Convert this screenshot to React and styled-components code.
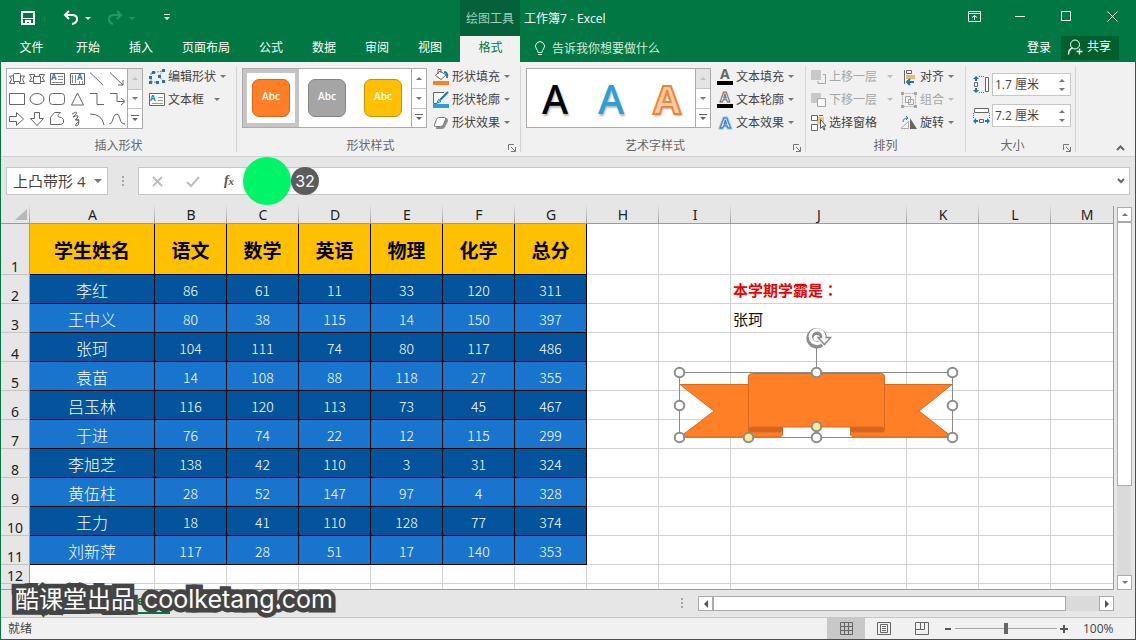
import React from "react";
import styled, { createGlobalStyle, css } from "styled-components";

const UI_FONT = `"Open Sans", "Noto Sans CJK SC", sans-serif`;
const GREEN = "#017843";

const GlobalStyle = createGlobalStyle`
  *, *::before, *::after { box-sizing: border-box; }
  body { margin: 0; background: #e6e6e6; }
  button, input { font: inherit; color: inherit; border: 0; padding: 0; margin: 0; background: none; border-radius: 0; }
  svg { display: block; flex: none; overflow: visible; }
`;

const Window = styled.div`
  display: flex;
  flex-direction: column;
  height: 100vh;
  min-height: 480px;
  overflow: hidden;
  border: 1px solid ${GREEN};
  border-top: 0;
  background: #e6e6e6;
  color: #444;
  font: 12px/16px ${UI_FONT};
`;

/* ---------- title bar ---------- */
const TitleBar = styled.header`
  display: flex;
  flex: 0 0 36px;
  background: ${GREEN};
  color: #fff;
`;
const QuickAccess = styled.div`
  display: flex;
  align-items: center;
  flex: 0 0 459px;
  padding-left: 18px;
`;
const QuickButton = styled.button`
  display: flex;
  align-items: center;
  justify-content: center;
  gap: 6px;
  height: 24px;
  width: ${(p) => p.$w || 44}px;
  margin-right: ${(p) => p.$gap || 0}px;
  opacity: ${(p) => (p.disabled ? 0.3 : 1)};
`;
const ContextTitle = styled.div`
  flex: 0 0 60px;
  padding-top: 2px;
  background: #05613a;
  color: #9fd0b6;
  line-height: 34px;
  text-align: center;
`;
const DocTitle = styled.h1`
  flex: 1;
  margin: 0;
  padding: 2px 0 0 4px;
  font: 400 12px/34px ${UI_FONT};
`;
const WindowButton = styled.button`
  display: flex;
  align-items: center;
  justify-content: center;
  width: 46px;
  height: 32px;
`;

/* ---------- ribbon tabs ---------- */
const TabRow = styled.nav`
  display: flex;
  flex: 0 0 26px;
  background: ${GREEN};
  color: #fff;
`;
const Tab = styled.button`
  height: 26px;
  padding: 0 14px 2px 15px;
  white-space: nowrap;
  ${(p) => p.$file && css`width: 60px;`}
  ${(p) =>
    p.$active &&
    css`
      width: 60px;
      margin-left: 4px;
      background: #f1f1f1;
      color: ${GREEN};
    `}
`;
const TellMe = styled.button`
  display: flex;
  align-items: center;
  gap: 6px;
  padding: 0 0 0 14px;
  margin-right: auto;
  color: #d5ebdf;
`;
const SignIn = styled.button`
  padding: 0 10px 2px;
`;
const Share = styled.button`
  display: flex;
  align-items: center;
  gap: 4px;
  height: 24px;
  padding: 0 8px 2px 6px;
  margin-right: 16px;
  background: #005f2b;
`;

/* ---------- ribbon ---------- */
const Ribbon = styled.section`
  display: flex;
  flex: 0 0 95px;
  padding-top: 4px;
  background: #f1f1f1;
  border-bottom: 1px solid #d2d2d2;
`;
const GroupBox = styled.div`
  display: flex;
  flex-direction: column;
  flex: 0 0 ${(p) => p.$w}px;
  height: 86px;
  padding: 0 0 0 5px;
  border-right: 1px solid #d4d4d4;
`;
const GroupBody = styled.div`
  display: flex;
  flex: 1;
  gap: ${(p) => p.$gap || 6}px;
`;
const GroupFoot = styled.div`
  position: relative;
  height: 14px;
  padding-right: ${(p) => (p.$launcher ? 21 : 5)}px;
  color: #666;
  line-height: 16px;
  text-align: center;
`;
const Launcher = styled.button`
  position: absolute;
  right: 4px;
  bottom: 0;
  width: 8px;
  height: 8px;
`;
const RibbonEnd = styled.div`
  display: flex;
  flex: 1;
  align-items: flex-end;
  justify-content: flex-end;
  padding: 0 10px 5px 0;
`;
const Gallery = styled.div`
  display: flex;
  height: ${(p) => p.$h || 60}px;
  margin-top: 2px;
  background: #fff;
  border: 1px solid #ababab;
`;
const ShapeGrid = styled.div`
  display: grid;
  grid-template-columns: repeat(6, 20px);
  grid-template-rows: repeat(3, 20px);
`;
const ShapeButton = styled.button`
  display: flex;
  align-items: center;
  justify-content: center;
`;
const GalleryScroll = styled.div`
  display: grid;
  grid-template-rows: repeat(3, 1fr);
  width: 15px;
  border-left: 1px solid #ababab;
`;
const ScrollStep = styled.button`
  display: flex;
  align-items: center;
  justify-content: center;
  background: ${(p) => (p.disabled ? "#e4e4e4" : "#fff")};
  & + & { border-top: 1px solid #c6c6c6; }
`;
const StyleItem = styled.button`
  display: flex;
  align-items: center;
  justify-content: center;
  width: 56px;
  border: 4px solid ${(p) => (p.$on ? "#c5c5c5" : "transparent")};
`;
const StyleSwatch = styled.span`
  width: 38px;
  height: 38px;
  border: 1px solid ${(p) => p.$edge};
  border-radius: 7px;
  background: ${(p) => p.$fill};
  color: #fff;
  font-size: 10px;
  font-weight: 600;
  line-height: 32px;
`;
const ArtItem = styled.button`
  width: 56px;
  padding-top: 2px;
  font: 500 40px/54px "Noto Sans", sans-serif;
  text-shadow: 1px 2px 2px rgba(0, 0, 0, 0.3);
  color: ${(p) => p.$fill};
  ${(p) =>
    p.$outline &&
    css`
      -webkit-text-stroke: 2px ${p.$outline};
      font-weight: 700;
    `}
`;
const CommandList = styled.div`
  display: flex;
  flex-direction: column;
`;
const CommandButton = styled.button`
  display: flex;
  align-items: center;
  height: 23px;
  padding-bottom: 2px;
  white-space: nowrap;
  color: ${(p) => (p.disabled ? "#a6a6a6" : "#444")};
`;
const CommandLabel = styled.span`
  margin: 0 ${(p) => p.$after}px 0 3px;
`;
const SizeRows = styled.div`
  display: flex;
  flex-direction: column;
  gap: 8px;
  padding: 7px 0 0 2px;
`;
const SizeField = styled.label`
  display: flex;
  align-items: center;
  gap: 2px;
`;
const SpinBox = styled.span`
  display: flex;
  width: 79px;
  height: 23px;
  background: #fff;
  border: 1px solid #c6c6c6;
`;
const SpinInput = styled.input`
  width: 60px;
  padding-left: 2px;
  outline: 0;
`;
const SpinButtons = styled.span`
  display: flex;
  flex-direction: column;
  justify-content: center;
  gap: 6px;
  padding-left: 6px;
`;

/* ---------- formula bar ---------- */
const FormulaRow = styled.section`
  position: relative;
  display: flex;
  flex: 0 0 49px;
  padding: 10px 5px 11px;
`;
const NameBox = styled.div`
  display: flex;
  align-items: center;
  width: 102px;
  height: 28px;
  background: #fff;
  border: 1px solid #c6c6c6;
`;
const NameInput = styled.input`
  width: 87px;
  padding-left: 6px;
  font: 15px/24px ${UI_FONT};
  outline: 0;
`;
const Grip = styled.div`
  display: grid;
  place-items: center;
  width: ${(p) => p.$w}px;
`;
const FormulaBox = styled.div`
  display: flex;
  align-items: center;
  flex: 1;
  height: 28px;
  background: #fff;
  border: 1px solid #c6c6c6;
`;
const FormulaButton = styled.button`
  display: grid;
  place-items: center;
  width: 36px;
  height: 26px;
  color: #555;
  font: italic 700 14px/20px "Liberation Serif", serif;
  small { font-size: 11px; }
`;
const FormulaInput = styled.input`
  flex: 1;
  min-width: 0;
  outline: 0;
`;
const ClickHalo = styled.div`
  position: absolute;
  left: 242px;
  top: 0;
  width: 48px;
  height: 48px;
  border-radius: 50%;
  background: #00f468;
`;
const CountBadge = styled.div`
  position: absolute;
  left: 290px;
  top: 10px;
  width: 28px;
  height: 28px;
  border-radius: 50%;
  background: #5c5c5c;
  color: #fff;
  font: 16px/28px Inter, sans-serif;
  text-align: center;
`;

/* ---------- sheet ---------- */
const SheetArea = styled.main`
  display: flex;
  flex: 1;
  min-height: 0;
`;
const GridPane = styled.div`
  position: relative;
  flex: 1;
  min-width: 0;
  overflow: hidden;
  border-right: 1px solid #9b9b9b;
  border-bottom: 1px solid #9b9b9b;
`;
const Grid = styled.table`
  width: calc(100% + 10px);
  table-layout: fixed;
  border-collapse: separate;
  border-spacing: 0;
  background: #fff;
`;
const ColHead = styled.th`
  height: 18px;
  padding: 0;
  border-bottom: 1px solid #9b9b9b;
  background: linear-gradient(#dcdcdc, #a0a0a0) right / 1px 100% no-repeat #e6e6e6;
  color: #222;
  font: 400 14px/17px "Noto Sans", sans-serif;
  vertical-align: bottom;
`;
const CornerMark = styled.svg`
  margin-left: 14px;
  margin-bottom: 3px;
`;
const RowHead = styled.th`
  padding: 0;
  border-right: 1px solid #9b9b9b;
  border-bottom: 1px solid #c4c4c4;
  background: #e6e6e6;
  color: #222;
  font: 400 14px/15px "Noto Sans", sans-serif;
  vertical-align: bottom;
`;
const SheetRow = styled.tr`
  height: ${(p) => p.$h}px;
`;
const Cell = styled.td`
  padding: 2px 0 0 2px;
  border-right: 1px solid #d2d2d2;
  border-bottom: 1px solid #d2d2d2;
  color: #111;
  font: 15px/24px "Noto Sans CJK SC", sans-serif;
  white-space: nowrap;
  ${(p) =>
    p.$note &&
    css`
      color: #f00000;
      font-family: "Noto Sans CJK TC", sans-serif;
      font-weight: 700;
    `}
`;
const DataCell = styled.td`
  padding: 2px 0 0;
  border-right: 1px solid #000;
  border-bottom: 1px solid #000;
  background: ${(p) => (p.$odd ? "#1874cd" : "#03549c")};
  color: #fff;
  font: ${(p) => (p.$name ? "300 16px/24px" : "300 14px/24px")} "Noto Sans CJK SC", sans-serif;
  text-align: center;
`;
const FieldCell = styled.td`
  padding: 2px 0 0;
  border-right: 1px solid #000;
  border-bottom: 1px solid #000;
  background: #ffc000;
  color: #000;
  font: 700 19px/28px "Noto Sans CJK SC", sans-serif;
  text-align: center;
`;
const Banner = styled.svg`
  position: absolute;
  left: 671px;
  top: 120px;
`;
const VScroll = styled.div`
  display: flex;
  flex-direction: column;
  width: 14px;
  margin: 1px 4px 0 3px;
  background: #dadada;
`;
const ScrollButton = styled.button`
  display: grid;
  place-items: center;
  flex: 0 0 15px;
  width: 15px;
  height: 15px;
  background: #fff;
  border: 1px solid #ababab;
`;
const VThumb = styled.div`
  flex: 0 0 264px;
  width: 15px;
  margin-bottom: auto;
  background: #fff;
  border: 1px solid #ababab;
`;

/* ---------- bottom bars ---------- */
const SheetTabs = styled.div`
  position: relative;
  display: flex;
  align-items: center;
  flex: 0 0 27px;
  padding-right: 21px;
`;
const SheetTab = styled.button`
  align-self: flex-start;
  width: 69px;
  height: 24px;
  margin: 0 auto 0 100px;
  border-bottom: 2px solid ${GREEN};
  color: ${GREEN};
  font-weight: 700;
`;
const HScroll = styled.div`
  display: flex;
  flex: 0 0 416px;
  background: #dadada;
`;
const HThumb = styled.div`
  flex: 0 0 353px;
  height: 15px;
  margin-right: auto;
  background: #fff;
  border: 1px solid #ababab;
`;
const Watermark = styled.div`
  position: absolute;
  left: 14px;
  top: -9px;
  color: #fff;
  font: 400 24px/36px Inter, "Noto Sans CJK SC", sans-serif;
  white-space: nowrap;
  -webkit-text-stroke: 9px #444;
  stroke-linejoin: round;
  paint-order: stroke fill;
`;
const WatermarkSite = styled.span`
  margin-left: 9px;
  font-size: 25px;
`;
const StatusBar = styled.footer`
  display: flex;
  align-items: center;
  flex: 0 0 22px;
  padding: 0 20px 0 7px;
  background: #f1f1f1;
  border-top: 1px solid #c6c6c6;
`;
const StatusText = styled.span`
  margin-right: auto;
`;
const ViewButton = styled.button`
  display: grid;
  place-items: center;
  width: 38px;
  height: 21px;
  background: ${(p) => (p.$on ? "#c8c8c8" : "transparent")};
`;
const ZoomButton = styled.button`
  display: grid;
  place-items: center;
  width: 14px;
  height: 20px;
`;
const ZoomSlider = styled.input`
  appearance: none;
  width: 102px;
  height: 20px;
  background: linear-gradient(#a6a6a6, #a6a6a6) center / 100% 1px no-repeat;
  &::-webkit-slider-thumb {
    appearance: none;
    width: 4px;
    height: 11px;
    background: #666;
  }
`;
const ZoomValue = styled.output`
  width: 32px;
  margin-left: 12px;
`;

/* ---------- small drawings ---------- */
const Icon = ({ w = 16, h = w, children, ...rest }) => (
  <svg width={w} height={h} viewBox={`0 0 ${w} ${h}`} fill="none" stroke="#666" aria-hidden="true" {...rest}>
    {children}
  </svg>
);
const Caret = ({ color = "#777", up }) => (
  <Icon w={6} h={3} stroke="none"><path fill={color} d={up ? "M0 3h6L3 0z" : "M0 0h6L3 3z"} /></Icon>
);
const SideCaret = ({ left }) => (
  <Icon w={4} h={8} stroke="none"><path fill="#555" d={left ? "M4 0v8L0 4z" : "M0 0v8l4-4z"} /></Icon>
);
const More = () => (
  <Icon w={8} h={7} stroke="none"><path fill="#666" d="M0 0h8v1H0zM1 3h6L4 6z" /></Icon>
);
const Dots = () => (
  <Icon w={2} h={11} stroke="none"><path fill="#a6a6a6" d="M0 0h2v2H0zM0 4h2v2H0zM0 8h2v2H0z" /></Icon>
);
const LetterA = ({ x, y, size = 9, ...rest }) => (
  <text x={x} y={y} fontFamily="Noto Sans" fontWeight="700" fontSize={size} stroke="none" fill="#1878b8" {...rest}>A</text>
);
const TextBoxIcon = () => (
  <Icon w={16} h={14}>
    <path d="M.5 .5h15v12H.5z" fill="#fff" />
    <LetterA x={1} y={8} size={8} />
    <path stroke="#999" d="M9 4.5h5M9 7.5h5M3 10.5h11" />
  </Icon>
);

const SHAPES = [
  ["上凸带形", <path d="M4.500 3.500q0-1 1-1h5q1 0 1 1v7h-7zM4.500 5H.5l2 3.500-2 4h5v-2M11.500 5h4l-2 3.500 2 4h-5v-2" />],
  ["前凸带形", <path d="M4.500 5.500h7v7h-7zM4.500 10.500h-4l2-3.500-2-3.500h5v2M11.500 10.500h4l-2-3.500 2-3.500h-5v2" />],
  ["横排文本框", <><path d="M1.500 2.500h14v11h-14z" /><LetterA x={2} y={9} size={8} /><path stroke="#888" d="M9 5.500h5M9 8.500h5M3 11.500h11" /></>],
  ["竖排文本框", <><path d="M1.500 2.500h14v11h-14z" /><LetterA x={8} y={9} size={8} /><path stroke="#888" d="M3.500 4v8M6.500 4v8M10.500 10v3M13.500 10v3" /></>],
  ["直线", <path d="M1 1.500l13 12.500" />],
  ["箭头", <path d="M1 1.500l13 12.500M14 9v5H9" />],
  ["矩形", <path d="M.5 2.500h15v11H.500z" />],
  ["椭圆", <ellipse cx="8" cy="8" rx="7" ry="5.500" />],
  ["圆角矩形", <rect x=".5" y="2.500" width="15" height="11" rx="3" />],
  ["三角形", <path d="M8.500 2l6 12h-12z" />],
  ["肘形连接符", <path d="M1 2.500h7v11h7" />],
  ["肘形箭头", <path d="M1 2.500h7v8h7M12 7l4 3.500-4 3.500" />],
  ["右箭头", <path d="M.5 5.500h7v-4l7 6.500-7 6.500v-4h-7z" />],
  ["下箭头", <path d="M5.500 1.500h5v6h4L8 14.500 1.500 7.500h4z" />],
  ["任意多边形", <path d="M1.500 13.500v-7l4-5h6c-4 3-3 5 1 5q3 1 2 5-1 2-3 2z" />],
  ["自由曲线", <path d="M3 3l4-2q2 1-3 5 5-2 5-1 0 2-3 4 4-2 4 0t-3 4q-1 2 0 2 3 0 3-4 0-2-3-2" />],
  ["弧形", <path d="M1 3q12 0 14 11" />],
  ["曲线", <path d="M0 13q3 0 4-5t4-5q2 0 3 5t5 5" />],
];

const FillIcon = () => (
  <Icon><path fill="#fff" d="M7 2L2.500 6.500 8 10.500l5-4.500zM5 5V.500h3V4" /><path stroke="#1878b8" strokeWidth="2" d="M11 3q4 0 3 6" /><path stroke="none" fill="#ff7f27" d="M0 12h16v4H0z" /></Icon>
);
const OutlineIcon = () => (
  <Icon><path fill="#fff" d="M11 .5H.5v11H4" /><path stroke="#1878b8" strokeWidth="2" d="M7 8l8-8" /><path stroke="#1878b8" d="M4 11l1.500-3.500L8 9.500z" /><path stroke="none" fill="#2b9fd6" d="M0 12h16v4H0z" /></Icon>
);
const EffectIcon = () => (
  <Icon><path stroke="none" fill="#8c8c8c" d="M5 3h8q2 0 2 3l-3 6q-1 2-3 2H3z" /><path stroke="#777" fill="#fff" d="M5.500 2.500h6q2 0 1 2l-2 5q-1 2-3 2h-5q-2 0-1-2l2-5q1-2 2-2z" /></Icon>
);
const TextFillIcon = () => (
  <Icon><LetterA x={3} y={10} size={14} fill="#666" /><path stroke="none" fill="#000" d="M0 12h16v4H0z" /></Icon>
);
const TextOutlineIcon = () => (
  <Icon><LetterA x={3} y={10} size={14} fill="#fff" stroke="#666" /><path stroke="none" fill="#000" d="M0 12h16v4H0z" /></Icon>
);
const TextEffectIcon = () => (
  <Icon><LetterA x={3} y={13} size={15} fill="#9ccbee" stroke="#9ccbee" strokeWidth="3" /><LetterA x={3} y={13} size={15} fill="#fff" stroke="#1878b8" /></Icon>
);
const EditShapeIcon = () => (
  <Icon><path stroke="#888" strokeDasharray="2 1" d="M2 4l12-2-4 5 4 5M2 4v9h6" /><path stroke="none" fill="#1878b8" d="M0 7h3v3H0zM3 2h3v3H3zM13 0h3v3h-3zM9 6h3v3H9zM13 11h3v3h-3zM0 12h3v3H0zM7 12h3v3H7z" /></Icon>
);
const ForwardIcon = () => (
  <Icon w={15}><path stroke="#a6a6a6" d="M12 5.500h2.500v9H7V12" /><path stroke="none" fill="#c8c8c8" d="M0 1h10v10H0z" /></Icon>
);
const BackwardIcon = () => (
  <Icon w={15}><path stroke="none" fill="#c8c8c8" d="M0 1h10v10H0z" /><path stroke="#a6a6a6" fill="#f8f8f8" d="M6.500 6.500h8v8h-8z" /></Icon>
);
const PaneIcon = () => (
  <Icon w={15}><path stroke="none" fill="#f3c27b" d="M6 2h7v7H6z" /><path fill="#fff" d="M.5 .5h6v5h-6zM.5 9.500h6v6h-6z" /><path d="M8 .5h4" /><path fill="#fff" stroke="#555" d="M9.500 4.500v9l2-2 1.500 3.500 1-.5-1.500-3.500h2.500z" /></Icon>
);
const AlignIcon = () => (
  <Icon><path d="M3.500 1v14M5.500 1.500h5v3h-5z" /><path stroke="none" fill="#f3b56b" d="M5 6h9v4H5z" /><path stroke="#1878b8" strokeWidth="2" d="M6 13h7M9 10l-3 3 3 3" /></Icon>
);
const GroupIcon = () => (
  <Icon><path stroke="#b0b0b0" strokeDasharray="2 1" d="M1.500 1.500h13v13h-13z" /><path stroke="#a6a6a6" d="M4.500 4.500h5v6h-5zM7.500 7.500h5v5h-5z" /><path stroke="none" fill="#a6a6a6" d="M0 0h3v3H0zM13 0h3v3h-3zM0 13h3v3H0zM13 13h3v3h-3z" /></Icon>
);
const RotateIcon = () => (
  <Icon><path stroke="#aaa" fill="#fff" d="M0 13.500h7.500V6.500z" /><path stroke="none" fill="#666" d="M9 3v11h7z" /><path stroke="#1878b8" d="M2 7q0-4 5-4M5 1l2 2-2 2" /></Icon>
);
const HeightIcon = () => (
  <Icon w={17} h={17}><path fill="#fff" d="M12.500 1.500h3v14h-3z" /><path strokeDasharray="1 1" d="M6 .5h6M6 16.500h6" /><path d="M1.500 6.500h3v4h-3z" /><path stroke="none" fill="#1878a8" d="M3 0l3 3H4v2H2V3H0zM3 17l3-3H4v-2H2v2H0z" /></Icon>
);
const WidthIcon = () => (
  <Icon w={17} h={17}><path fill="#fff" d="M1.500 1.500h14v4h-14z" /><path strokeDasharray="1 1" d="M.5 6v5M16.500 6v5" /><path d="M6.500 12.500h4v3h-4z" /><path stroke="none" fill="#1878a8" d="M0 14l3-3v2h2v2H3v2zM17 14l-3-3v2h-2v2h2v2z" /></Icon>
);

const Command = ({ icon, label, after = 6, menu = true, disabled }) => (
  <CommandButton disabled={disabled}>
    {icon}
    <CommandLabel $after={after}>{label}</CommandLabel>
    {menu && <Caret color={disabled ? "#bbb" : "#777"} />}
  </CommandButton>
);

const Steps = ({ topDisabled }) => (
  <GalleryScroll>
    <ScrollStep aria-label="上一行" disabled={topDisabled}><Caret up color={topDisabled ? "#c2c2c2" : "#777"} /></ScrollStep>
    <ScrollStep aria-label="下一行"><Caret /></ScrollStep>
    <ScrollStep aria-label="其他"><More /></ScrollStep>
  </GalleryScroll>
);

const Group = ({ label, width, launcher, gap, children }) => (
  <GroupBox $w={width}>
    <GroupBody $gap={gap}>{children}</GroupBody>
    <GroupFoot $launcher={launcher}>
      {label}
      {launcher && (
        <Launcher aria-label={`${label}设置`}>
          <Icon w={8} h={8} stroke="#777"><path d="M.5 6V.5H6M3 3l4 4M7.500 3v4.500H3" /></Icon>
        </Launcher>
      )}
    </GroupFoot>
  </GroupBox>
);

const Size = ({ icon, value, name }) => (
  <SizeField>
    {icon}
    <SpinBox>
      <SpinInput aria-label={name} defaultValue={value} />
      <SpinButtons>
        <button aria-label={`增加${name}`}><Caret up /></button>
        <button aria-label={`减少${name}`}><Caret /></button>
      </SpinButtons>
    </SpinBox>
  </SizeField>
);

/* ---------- data ---------- */
const TABS = ["开始", "插入", "页面布局", "公式", "数据", "审阅", "视图"];
const COLUMNS = [
  ["A", 125], ["B", 72], ["C", 72], ["D", 72], ["E", 72], ["F", 72], ["G", 72],
  ["H", 72], ["I", 72], ["J", 176], ["K", 72], ["L", 72], ["M", null],
];
const FIELDS = ["学生姓名", "语文", "数学", "英语", "物理", "化学", "总分"];
const STUDENTS = [
  ["李红", 86, 61, 11, 33, 120, 311],
  ["王中义", 80, 38, 115, 14, 150, 397],
  ["张珂", 104, 111, 74, 80, 117, 486],
  ["袁苗", 14, 108, 88, 118, 27, 355],
  ["吕玉林", 116, 120, 113, 73, 45, 467],
  ["于进", 76, 74, 22, 12, 115, 299],
  ["李旭芝", 138, 42, 110, 3, 31, 324],
  ["黄伍柱", 28, 52, 147, 97, 4, 328],
  ["王力", 18, 41, 110, 128, 77, 374],
  ["刘新萍", 117, 28, 51, 17, 140, 353],
];
const NOTES = { 2: "本学期学霸是：", 3: "张珂" };
const STYLES = [["#ff7f27", "#d9661b"], ["#a5a5a5", "#858585"], ["#ffc000", "#c49400"]];
const HANDLES = [[679, 372], [816, 372], [952, 372], [679, 405], [952, 405], [679, 437], [816, 437], [952, 437]];

const EmptyCells = ({ names, note }) =>
  names.map((c) => (
    <Cell key={c} $note={c === "J" && note === NOTES[2]}>{c === "J" ? note : null}</Cell>
  ));
const ALL = COLUMNS.map(([c]) => c);
const RIGHT = ALL.slice(7);

export default function App() {
  return (
    <Window>
      <GlobalStyle />
      <TitleBar>
        <QuickAccess>
          <QuickButton aria-label="保存" $w={18} $gap={18}>
            <Icon stroke="#fff" w={14} h={14}><path strokeWidth="2" d="M1 1h12v12H1z" /><path strokeWidth="1" d="M2 7.500h10" /><path fill="#fff" stroke="none" d="M4 9h6v4H8v-2H6v2H4z" /></Icon>
          </QuickButton>
          <QuickButton aria-label="撤消">
            <Icon stroke="#fff"><path strokeWidth="2" d="M6 1L2 5l4 4M2 5h7q5 0 5 4t-5 5" /></Icon>
            <Caret color="#fff" />
          </QuickButton>
          <QuickButton aria-label="恢复" disabled $gap={16}>
            <Icon stroke="#7fe0b4"><path strokeWidth="2" d="M10 1l4 4-4 4M14 5H7q-5 0-5 4t4 5" /></Icon>
            <Caret color="#7fe0b4" />
          </QuickButton>
          <QuickButton aria-label="自定义快速访问工具栏" $w={16}>
            <Icon w={6} h={8} stroke="none"><path fill="#fff" d="M0 0h6v1H0zM0 3h6L3 6z" /></Icon>
          </QuickButton>
        </QuickAccess>
        <ContextTitle>绘图工具</ContextTitle>
        <DocTitle>工作簿7 - Excel</DocTitle>
        <WindowButton aria-label="功能区显示选项">
          <Icon stroke="#fff" w={13} h={11}><path d="M.5 .5h12v10H.5zM.5 2.500h12M6.500 9V4.500M4 6.500l2.500-2L9 6.500" /></Icon>
        </WindowButton>
        <WindowButton aria-label="最小化"><Icon stroke="#fff" w={10} h={1}><path d="M0 .5h10" /></Icon></WindowButton>
        <WindowButton aria-label="最大化"><Icon stroke="#fff" w={10} h={10}><path d="M.5 .5h9v9h-9z" /></Icon></WindowButton>
        <WindowButton aria-label="关闭"><Icon stroke="#fff" w={11} h={11}><path d="M.5 .5l10 10M10.500 .5l-10 10" /></Icon></WindowButton>
      </TitleBar>

      <TabRow>
        <Tab $file>文件</Tab>
        {TABS.map((t) => <Tab key={t}>{t}</Tab>)}
        <Tab $active>格式</Tab>
        <TellMe>
          <Icon stroke="#e8f5ee" w={12} h={14}><path d="M4 10.500q0-2-1.500-3.500a4.500 4.500 0 1 1 7 0Q8 8.500 8 10.500zM4 12.500h4" /></Icon>
          告诉我你想要做什么
        </TellMe>
        <SignIn>登录</SignIn>
        <Share>
          <Icon stroke="#fff" w={16} h={16}><circle cx="8" cy="5.500" r="4.500" /><path strokeWidth="1.400" d="M1.500 15.500q0-5 4-6.500M9.500 12.500h6M12.500 9.500v6" /></Icon>
          共享
        </Share>
      </TabRow>

      <Ribbon>
        <Group label="插入形状" width={236}>
          <Gallery $h={61}>
            <ShapeGrid>
              {SHAPES.map(([name, art]) => (
                <ShapeButton key={name} aria-label={name}><Icon>{art}</Icon></ShapeButton>
              ))}
            </ShapeGrid>
            <Steps topDisabled />
          </Gallery>
          <CommandList>
            <Command icon={<EditShapeIcon />} label="编辑形状" after={4} />
            <Command icon={<TextBoxIcon />} label="文本框" after={10} />
          </CommandList>
        </Group>
        <Group label="形状样式" width={284} launcher>
          <Gallery>
            {STYLES.map(([fill, edge], i) => (
              <StyleItem key={fill} $on={i === 0}><StyleSwatch $fill={fill} $edge={edge}>Abc</StyleSwatch></StyleItem>
            ))}
            <Steps />
          </Gallery>
          <CommandList>
            <Command icon={<FillIcon />} label="形状填充" after={4} />
            <Command icon={<OutlineIcon />} label="形状轮廓" after={4} />
            <Command icon={<EffectIcon />} label="形状效果" after={4} />
          </CommandList>
        </Group>
        <Group label="艺术字样式" width={285} launcher>
          <Gallery>
            <ArtItem $fill="#000">A</ArtItem>
            <ArtItem $fill="#2b9fd6">A</ArtItem>
            <ArtItem $fill="#fbcdaa" $outline="#f5822d">A</ArtItem>
            <Steps topDisabled />
          </Gallery>
          <CommandList>
            <Command icon={<TextFillIcon />} label="文本填充" after={4} />
            <Command icon={<TextOutlineIcon />} label="文本轮廓" after={4} />
            <Command icon={<TextEffectIcon />} label="文本效果" after={4} />
          </CommandList>
        </Group>
        <Group label="排列" width={160} gap={8}>
          <CommandList>
            <Command icon={<ForwardIcon />} label="上移一层" after={10} disabled />
            <Command icon={<BackwardIcon />} label="下移一层" after={10} disabled />
            <Command icon={<PaneIcon />} label="选择窗格" menu={false} />
          </CommandList>
          <CommandList>
            <Command icon={<AlignIcon />} label="对齐" after={4} />
            <Command icon={<GroupIcon />} label="组合" after={4} disabled />
            <Command icon={<RotateIcon />} label="旋转" after={4} />
          </CommandList>
        </Group>
        <Group label="大小" width={110} launcher>
          <SizeRows>
            <Size icon={<HeightIcon />} value="1.7 厘米" name="高度" />
            <Size icon={<WidthIcon />} value="7.2 厘米" name="宽度" />
          </SizeRows>
        </Group>
        <RibbonEnd>
          <button aria-label="折叠功能区"><Icon w={9} h={6}><path strokeWidth="2" d="M1 5l3.500-3.500L8 5" /></Icon></button>
        </RibbonEnd>
      </Ribbon>

      <FormulaRow>
        <NameBox>
          <NameInput aria-label="名称框" defaultValue="上凸带形 4" />
          <button aria-label="名称列表"><Icon w={8} h={4} stroke="none"><path fill="#777" d="M0 0h8L4 4z" /></Icon></button>
        </NameBox>
        <Grip $w={30}><Dots /></Grip>
        <FormulaBox>
          <FormulaButton aria-label="取消"><Icon w={11} h={11} stroke="#bdbdbd"><path strokeWidth="2" d="M1 1l9 9M10 1l-9 9" /></Icon></FormulaButton>
          <FormulaButton aria-label="输入"><Icon w={14} h={11} stroke="#bdbdbd"><path strokeWidth="2" d="M1 6l4 4 8-9" /></Icon></FormulaButton>
          <FormulaButton aria-label="插入函数"><span>f<small>x</small></span></FormulaButton>
          <FormulaInput aria-label="编辑栏" />
          <button aria-label="展开编辑栏"><Icon w={16} h={6}><path strokeWidth="2" d="M5 1l3 3 3-3" /></Icon></button>
        </FormulaBox>
        <ClickHalo />
        <CountBadge>32</CountBadge>
      </FormulaRow>

      <SheetArea>
        <GridPane>
          <Grid>
            <colgroup>
              <col width={29} />
              {COLUMNS.map(([c, w]) => <col key={c} width={w || undefined} />)}
            </colgroup>
            <thead>
              <tr>
                <ColHead aria-label="全选"><CornerMark width="12" height="11"><path fill="#b8b8b8" d="M12 0v11H0z" /></CornerMark></ColHead>
                {ALL.map((c) => <ColHead key={c}>{c}</ColHead>)}
              </tr>
            </thead>
            <tbody>
              <SheetRow $h={51}>
                <RowHead>1</RowHead>
                {FIELDS.map((f) => <FieldCell key={f}>{f}</FieldCell>)}
                <EmptyCells names={RIGHT} />
              </SheetRow>
              {STUDENTS.map((row, i) => (
                <SheetRow key={row[0]} $h={29}>
                  <RowHead>{i + 2}</RowHead>
                  {row.map((v, j) => <DataCell key={j} $odd={i % 2 === 1} $name={j === 0}>{v}</DataCell>)}
                  <EmptyCells names={RIGHT} note={NOTES[i + 2]} />
                </SheetRow>
              ))}
              <SheetRow $h={19}><RowHead>12</RowHead><EmptyCells names={ALL} /></SheetRow>
              <SheetRow $h={29}><RowHead /><EmptyCells names={ALL} /></SheetRow>
            </tbody>
          </Grid>
          <Banner width="290" height="120" viewBox="672 326 290 120" fill="none" role="img" aria-label="上凸带形 4">
            <g fill="#ff7f27" stroke="#d9691e">
              <path d="M680 384.500H749V428H782.500V434Q782.500 437 778 437H680L714 411z" />
              <path d="M952 384.500H884V428H850.500V434Q850.500 437 855 437H952L919 411z" />
              <path fill="#d4651c" d="M748.500 430q0-3 4-3H782.500V430q0 2-3 2H751q-2.500 0-2.500-2zM884.500 430q0-3-4-3H850.500V430q0 2 3 2H882q2.500 0 2.500-2z" />
              <path d="M748.500 430V376q0-2.500 4-2.500H880.500q4 0 4 2.500V430q0-3-4-3H752.500q-4 0-4 3z" />
            </g>
            <path stroke="#8c8c8c" d="M679.500 372.500H952.500V437.500H679.500zM816.500 348V372" />
            {HANDLES.map(([x, y]) => <circle key={`${x}-${y}`} cx={x + 0.5} cy={y + 0.5} r="4.800" fill="#fff" stroke="#8c8c8c" strokeWidth="2" />)}
            <circle cx="816.500" cy="426.500" r="4.800" fill="#fbe88f" stroke="#8c8c8c" strokeWidth="2" />
            <circle cx="748.500" cy="437.500" r="4.800" fill="#fbe88f" stroke="#8c8c8c" strokeWidth="2" />
            <path stroke="#8c8c8c" strokeWidth="7" d="M821 343.500A6.800 6.800 0 1 1 823.500 338" />
            <path stroke="#8c8c8c" strokeWidth="1.500" fill="#fff" d="M818 337.500H830.500L824.500 344.500z" />
            <path stroke="#fff" strokeWidth="3.200" d="M820.300 342.700A6.800 6.800 0 1 1 823.500 339" />
          </Banner>
        </GridPane>
        <VScroll>
          <ScrollButton aria-label="向上滚动"><Caret up /></ScrollButton>
          <VThumb />
          <ScrollButton aria-label="向下滚动"><Caret /></ScrollButton>
        </VScroll>
      </SheetArea>

      <SheetTabs>
        <SheetTab>Sheet1</SheetTab>
        <Grip $w={32}><Dots /></Grip>
        <HScroll>
          <ScrollButton aria-label="向左滚动"><SideCaret left /></ScrollButton>
          <HThumb />
          <ScrollButton aria-label="向右滚动"><SideCaret /></ScrollButton>
        </HScroll>
        <Watermark>酷课堂出品<WatermarkSite>coolketang.com</WatermarkSite></Watermark>
      </SheetTabs>

      <StatusBar>
        <StatusText>就绪</StatusText>
        <ViewButton $on aria-label="普通"><Icon w={13} h={13}><path d="M.5 .5h12v12H.5zM.5 4.500h12M.5 8.500h12M4.500 .5v12M8.500 .5v12" /></Icon></ViewButton>
        <ViewButton aria-label="页面布局"><Icon w={14} h={13}><path d="M.5 .5h13v12H.5zM3.500 2.500h7v8h-7zM5 4.500h4M5 6.500h4M5 8.500h4" /></Icon></ViewButton>
        <ViewButton aria-label="分页预览"><Icon w={14} h={13}><path d="M.5 .5h13v12H.5zM.5 7.500h9v-7M5.500 .5v7" /></Icon></ViewButton>
        <ZoomButton aria-label="缩小"><Icon w={6} h={2} stroke="none"><path fill="#555" d="M0 0h6v2H0z" /></Icon></ZoomButton>
        <ZoomSlider type="range" aria-label="显示比例" min="0" max="100" defaultValue="50" />
        <ZoomButton aria-label="放大"><Icon w={8} h={8} stroke="none"><path fill="#555" d="M3 0h2v8H3zM0 3h8v2H0z" /></Icon></ZoomButton>
        <ZoomValue>100%</ZoomValue>
      </StatusBar>
    </Window>
  );
}
